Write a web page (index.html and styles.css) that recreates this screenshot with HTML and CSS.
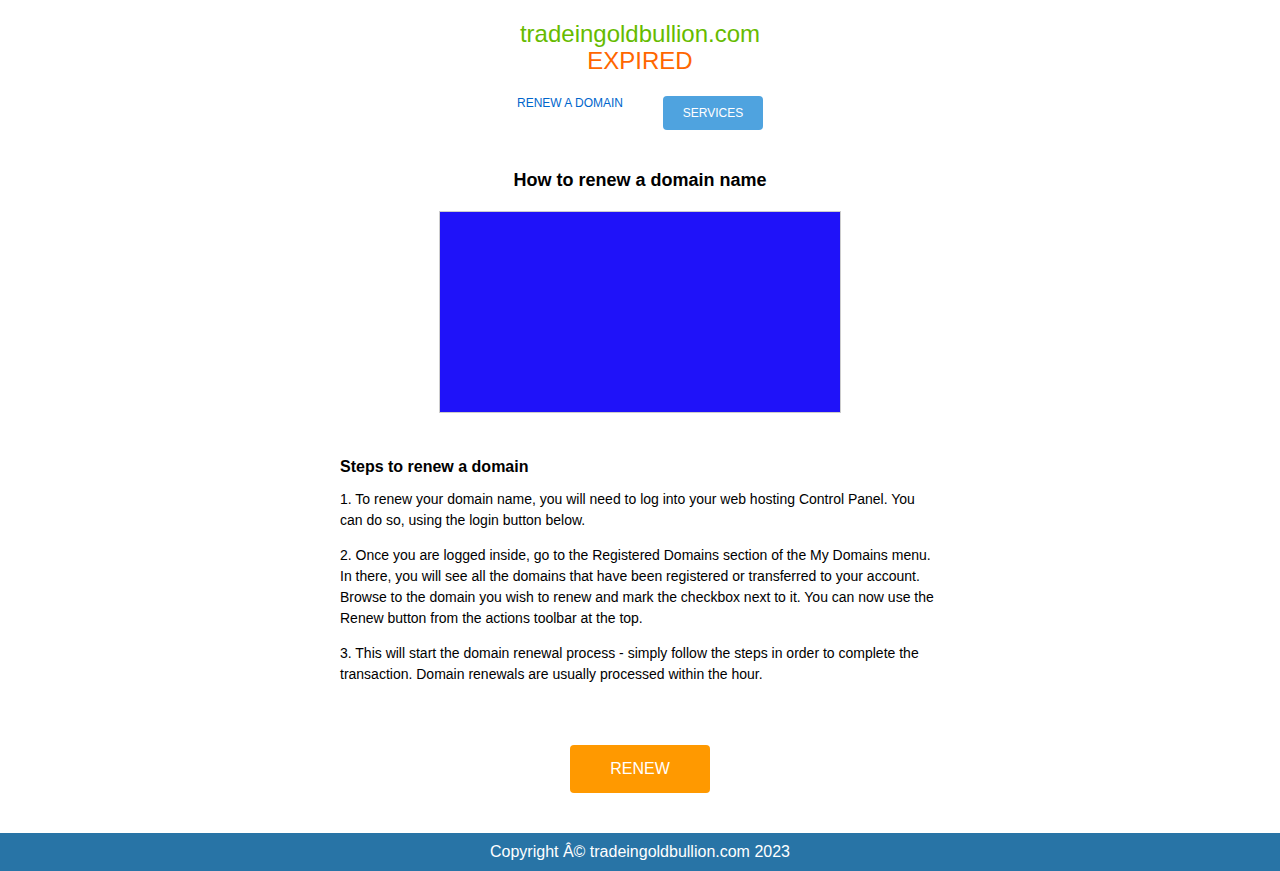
FILE: index.html
```html
<!DOCTYPE html>
<html>
<head>
<meta charset="utf-8">
<link rel="stylesheet" href="styles.css">
</head>
<body>
<div class="page">
  <header class="header">
    <div class="domain">tradeingoldbullion.com</div>
    <div class="expired">EXPIRED</div>
    <nav class="nav">
      <a class="nav-link" href="#">RENEW A DOMAIN</a>
      <a class="nav-btn" href="#">SERVICES</a>
    </nav>
  </header>
  <main class="main">
    <h2 class="title">How to renew a domain name</h2>
    <div class="video"></div>
    <section class="steps">
      <h3 class="steps-title">Steps to renew a domain</h3>
      <p>1. To renew your domain name, you will need to log into your web hosting Control Panel. You can do so, using the login button below.</p>
      <p>2. Once you are logged inside, go to the Registered Domains section of the My Domains menu. In there, you will see all the domains that have been registered or transferred to your account. Browse to the domain you wish to renew and mark the checkbox next to it. You can now use the Renew button from the actions toolbar at the top.</p>
      <p>3. This will start the domain renewal process - simply follow the steps in order to complete the transaction. Domain renewals are usually processed within the hour.</p>
    </section>
    <div class="cta"><a class="renew" href="#">RENEW</a></div>
  </main>
  <footer class="footer">Copyright Â© tradeingoldbullion.com 2023</footer>
</div>
</body>
</html>
```
FILE: styles.css
```css
html, body {
  margin: 0;
  padding: 0;
  background: #fff;
}
body {
  font-family: "Liberation Sans", Arial, sans-serif;
  color: #000;
}
.page {
  display: flex;
  flex-direction: column;
  min-height: 871px;
}
.header {
  display: flex;
  flex-direction: column;
  align-items: center;
  padding-top: 20px;
}
.domain {
  font-size: 24px;
  line-height: 27px;
  color: #66bb00;
}
.expired {
  font-size: 24px;
  line-height: 27px;
  color: #ff6600;
}
.nav {
  display: flex;
  align-items: flex-start;
  gap: 40px;
  margin-top: 22px;
}
.nav-link {
  font-size: 12px;
  line-height: 14px;
  color: #0066cc;
  text-decoration: none;
}
.nav-btn {
  display: flex;
  align-items: center;
  justify-content: center;
  width: 100px;
  height: 34px;
  background: #4fa3df;
  border-radius: 4px;
  color: #fff;
  font-size: 12px;
  text-decoration: none;
}
.main {
  display: flex;
  flex-direction: column;
  align-items: center;
  flex: 1;
}
.title {
  font-size: 18px;
  line-height: 22px;
  font-weight: bold;
  margin: 39px 0 0;
}
.video {
  width: 400px;
  height: 200px;
  background: #1f12f9;
  border: 1px solid #cccccc;
  margin-top: 20px;
}
.steps {
  width: 600px;
  margin-top: 44px;
}
.steps-title {
  font-size: 16px;
  line-height: 19px;
  font-weight: bold;
  margin: 0 0 13px;
}
.steps p {
  font-size: 14px;
  line-height: 21px;
  margin: 0 0 14px;
}
.cta {
  margin-top: 46px;
}
.renew {
  display: flex;
  align-items: center;
  justify-content: center;
  width: 140px;
  height: 48px;
  background: #ff9900;
  border-radius: 4px;
  color: #fff;
  font-size: 16px;
  text-decoration: none;
}
.footer {
  margin-top: 40px;
  height: 38px;
  background: #2874a6;
  color: #fff;
  font-size: 16px;
  display: flex;
  align-items: center;
  justify-content: center;
}
```
